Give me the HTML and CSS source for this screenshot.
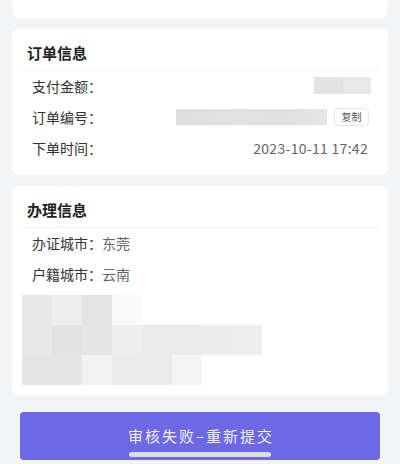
FILE: index.html
```html
<!DOCTYPE html>
<html>
<head>
<meta charset="utf-8">
<meta name="viewport" content="width=device-width, initial-scale=1">
<link rel="stylesheet" href="styles.css">
</head>
<body>
  <div class="card card-top"></div>

  <div class="card">
    <div class="card-title">订单信息</div>
    <div class="row">
      <span class="label">支付金额：</span>
      <span class="blur blur-amount"><i></i><i></i></span>
    </div>
    <div class="row">
      <span class="label">订单编号：</span>
      <span class="order-no">
        <span class="blur blur-no"></span>
        <button class="copy-btn">复制</button>
      </span>
    </div>
    <div class="row">
      <span class="label">下单时间：</span>
      <span class="value date">2023-10-11 17:42</span>
    </div>
  </div>

  <div class="card card-info">
    <div class="card-title">办理信息</div>
    <div class="row row-left">
      <span class="label">办证城市：</span>
      <span class="value">东莞</span>
    </div>
    <div class="row row-left">
      <span class="label">户籍城市：</span>
      <span class="value">云南</span>
    </div>
    <div class="mosaic">
      <div class="px g8"></div><div class="px g3"></div><div class="px g4"></div><div class="px g9"></div>
      <div></div><div></div><div></div><div></div>
      <div class="px g8"></div><div class="px g2"></div><div class="px g6"></div><div class="px g3"></div>
      <div class="px g5"></div><div class="px g5"></div><div class="px g7"></div><div class="px g3"></div>
      <div class="px g6"></div><div class="px g6"></div><div class="px g1"></div><div class="px g5"></div>
      <div class="px g5"></div><div class="px g0"></div><div></div><div></div>
    </div>
  </div>

  <div class="footer">
    <button class="submit-btn">审核失败–重新提交</button>
  </div>
  <div class="home-bar"></div>
</body>
</html>
```

FILE: styles.css
```css
html {
  font-family: "Noto Sans CJK SC", "Noto Sans", sans-serif;
  background-color: #f3f4f6;
}

body {
  margin: 0;
  color: #333;
}

.card {
  background-color: #fff;
  margin: 0 12px 11px 12px;
  padding: 0 9px 11px 10px;
  border-radius: 8px;
}

.card-top {
  height: 18px;
  padding: 0;
  border-radius: 0 0 8px 8px;
}

.card-info {
  padding-bottom: 10px;
}

.card-title {
  font-size: 15px;
  font-weight: 600;
  color: #222;
  line-height: 22px;
  padding: 13px 0 6px 5px;
  border-bottom: 1px solid #f2f2f2;
}

.row {
  display: flex;
  align-items: center;
  justify-content: space-between;
  height: 29px;
  padding: 0 11px 2px 10px;
  font-size: 14px;
}

.row-left {
  justify-content: flex-start;
}

.label {
  color: #333;
}

.value {
  color: #666;
}

.date {
  letter-spacing: 0.3px;
}

.blur {
  display: flex;
  height: 17px;
}

.blur-amount {
  width: 57px;
  margin-right: -3px;
}

.blur-amount i {
  flex: 1;
  background-color: #e3e3e3;
}

.blur-amount i + i {
  background-color: #e9e9e9;
}

.order-no {
  display: flex;
  align-items: center;
}

.blur-no {
  width: 151px;
  height: 16px;
  background: linear-gradient(to right, #dedede, #e2e2e2 40%, #e0e0e0 70%, #e6e6e6);
  margin-right: 7px;
}

.copy-btn {
  font-family: inherit;
  font-size: 10px;
  color: #555;
  background-color: #fff;
  border: 1px solid #e6e6e6;
  border-radius: 4px;
  width: 35px;
  height: 18px;
  padding: 0;
  line-height: 16px;
  margin-right: -1px;
}

.mosaic {
  display: grid;
  grid-template-columns: repeat(8, 30px);
  grid-auto-rows: 30px;
  margin-top: 5px;
}

.g0 { background-color: #f4f4f4; }
.g1 { background-color: #f2f2f2; }
.g2 { background-color: #e2e2e2; }
.g3 { background-color: #eeeeee; }
.g4 { background-color: #e4e4e4; }
.g5 { background-color: #eaeaea; }
.g6 { background-color: #e6e6e6; }
.g7 { background-color: #ececec; }
.g8 { background-color: #e8e8e8; }
.g9 { background-color: #fafafa; }

.footer {
  padding: 6px 20px 0 20px;
}

.submit-btn {
  width: 100%;
  height: 48px;
  border: none;
  border-radius: 4px;
  background-color: #6c68e6;
  color: #f0f0f8;
  font-family: inherit;
  font-size: 15px;
  letter-spacing: 2px;
  padding: 0 0 2px 2px;
}

/* iOS home indicator */
.home-bar {
  position: absolute;
  left: 129px;
  top: 452px;
  width: 142px;
  height: 5px;
  border-radius: 3px;
  background-color: #dcdce4;
}
```
